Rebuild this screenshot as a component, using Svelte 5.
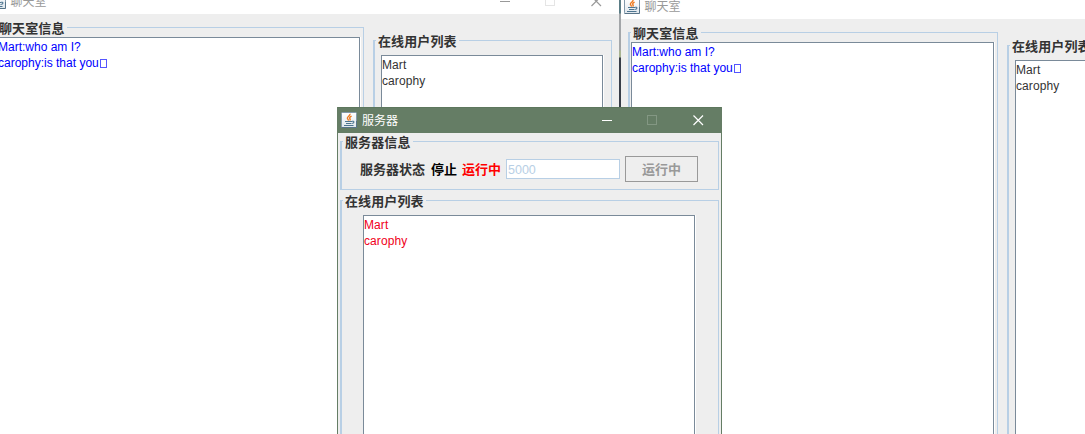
<script>
  const messages = ['Mart:who am I?', 'carophy:is that you'];
  const users = ['Mart', 'carophy'];
  const clients = [
    { x: -13, y: -12 },
    { x: 621, y: -7 }
  ];
</script>

{#snippet titlebar(title)}
  <header class="titlebar">
    <svg class="java" viewBox="0 0 16 16" width="16" height="16">
      <defs>
        <linearGradient id="cup" x1="0" y1="0" x2="0" y2="1">
          <stop offset="0" stop-color="#ffffff" />
          <stop offset="1" stop-color="#dfe6ec" />
        </linearGradient>
      </defs>
      <rect x="0.5" y="0.5" width="15" height="15" rx="1" fill="url(#cup)" stroke="#8298aa" />
      <path d="M0.5 15.5h15V9" fill="none" stroke="#587489" />
      <path d="M9 1.800c.6 2-3 2.900-2.600 4.500.2.800 1.200 1.200.9 2.300M10.600 4.200C8.500 5.200 8.300 6 9 6.800c.4.600.2 1.200-.4 1.800" fill="none" stroke="#ee7a20" stroke-width="1.400" />
      <path d="M4 9.500h7M5 11.500h5.500M3 13.500h9.500M11 9.300c2.500-.6 2.600 1.500.2 2.300" fill="none" stroke="#4d7590" stroke-width="1.100" />
    </svg>
    <span class="caption">{title}</span>
    <svg class="controls" viewBox="0 0 102 11" width="102" height="11">
      <path d="M0 5.500h10" stroke="currentColor" fill="none" />
      <rect class="max" x="45.500" y="0.500" width="9" height="9" fill="none" stroke="currentColor" />
      <path d="M91.500 0.500l9.500 9.500M101 0.500l-9.500 9.500" stroke="currentColor" stroke-width="1.200" fill="none" />
    </svg>
  </header>
{/snippet}

<div class="desktop">
  {#each clients as c}
    <section class="window client" style="left:{c.x}px;top:{c.y}px">
      {@render titlebar('聊天室')}
      <div class="columns">
        <fieldset class="chat">
          <legend>聊天室信息</legend>
          <div class="pane blue">
            {#each messages as m, i}
              <p>{m}{#if i === 1}<span class="missing"></span>{/if}</p>
            {/each}
          </div>
        </fieldset>
        <fieldset class="people">
          <legend>在线用户列表</legend>
          <div class="pane">
            {#each users as u}<p>{u}</p>{/each}
          </div>
        </fieldset>
      </div>
    </section>
  {/each}

  <section class="window server">
    {@render titlebar('服务器')}
    <div class="stack">
      <fieldset class="status">
        <legend>服务器信息</legend>
        <div class="row">
          <span class="state">服务器状态</span>
          <span class="stop">停止</span>
          <span class="running">运行中</span>
          <div class="port">5000</div>
          <button disabled>运行中</button>
        </div>
      </fieldset>
      <fieldset class="online">
        <legend>在线用户列表</legend>
        <div class="pane red">
          {#each users as u}<p>{u}</p>{/each}
        </div>
      </fieldset>
    </div>
  </section>
</div>

<style>
  :global(body) { margin: 0; }
  .desktop {
    position: relative;
    width: 1085px;
    height: 434px;
    overflow: hidden;
    background: linear-gradient(#5b7d86 0 13px, #a3a6a9 14px 50px, #a9b491 51px 57px, #383d48 58px);
    font-family: "Liberation Sans", "Noto Sans CJK SC", sans-serif;
    font-size: 12px;
    color: #333;
  }
  .window {
    position: absolute;
    box-sizing: border-box;
    display: flex;
    flex-direction: column;
    height: 470px;
    background: #eee;
  }
  .client { width: 632px; }
  .server {
    left: 337px;
    top: 107px;
    width: 385px;
    border: solid #657d65;
    border-width: 0 1px;
  }
  .titlebar {
    flex: none;
    box-sizing: border-box;
    height: 26px;
    display: flex;
    align-items: center;
    padding: 0 17px 0 3px;
    background: #fff;
    color: #999;
  }
  .server .titlebar {
    background: #657d65;
    color: #fff;
    box-shadow: inset 0 1px #5d775d;
  }
  .java { flex: none; }
  .caption {
    flex: 1;
    margin-left: 5px;
    font: 12px/18px "Noto Sans CJK SC", sans-serif;
  }
  .client .caption { margin-left: 4.500px; }
  .max { opacity: 0.25; }
  .server .max { opacity: 0.2; }
  .columns {
    flex: 1;
    display: flex;
    gap: 9px;
    padding: 5px 7px 0;
  }
  .stack {
    flex: 1;
    display: flex;
    flex-direction: column;
    gap: 2px;
    padding: 0 2px;
  }
  fieldset {
    box-sizing: border-box;
    min-width: 0;
    margin: 0;
    padding: 0;
    border: 1px solid #b8cfe5;
    border-left-width: 2px;
  }
  legend {
    height: 17px;
    margin-left: 1px;
    padding: 0 2px;
    font: bold 13px/17px "Noto Sans CJK SC", sans-serif;
    letter-spacing: 0.1px;
    white-space: nowrap;
  }
  .chat { width: 370px; padding-top: 1px; }
  .chat .pane { margin: 0 3px 0 1px; }
  .people { width: 239px; margin-top: 13px; padding-top: 6px; }
  .people .pane { margin: 0 8px 0 6px; }
  .status { height: 57px; padding-top: 6px; }
  .online { flex: 1; padding-top: 6px; }
  .online .pane { margin: 0 23px 0 21px; }
  .pane {
    box-sizing: border-box;
    height: 440px;
    padding-top: 1px;
    background: #fff;
    border: 1px solid #7a8a99;
    box-shadow: 1px 0 #fff;
  }
  p {
    margin: 0;
    height: 16px;
    line-height: 17px;
    white-space: nowrap;
  }
  .pane:not(.blue) p { letter-spacing: 0.1px; }
  .blue { color: #00f; }
  .red { color: #f00020; }
  .missing {
    display: inline-block;
    box-sizing: border-box;
    width: 7px;
    height: 9px;
    margin-left: 1px;
    border: 1px solid #55f;
    vertical-align: -1px;
  }
  .row {
    display: flex;
    align-items: center;
    height: 26px;
    margin-left: 18px;
    font: bold 13px/20px "Noto Sans CJK SC", sans-serif;
  }
  .state { width: 71px; }
  .stop { width: 31px; color: #000; }
  .running { width: 44px; color: #f00; }
  .port {
    box-sizing: border-box;
    width: 114px;
    height: 20px;
    padding-left: 1px;
    border: 1px solid #b8cfe5;
    background: #fff;
    color: #b8cfe5;
    font: 12.500px/20px "Liberation Sans", sans-serif;
  }
  button {
    box-sizing: border-box;
    width: 73px;
    height: 26px;
    margin-left: 5px;
    padding: 0;
    border: 1px solid #999;
    background: #eee;
    color: #999;
    font: bold 13px/24px "Noto Sans CJK SC", sans-serif;
  }
</style>
